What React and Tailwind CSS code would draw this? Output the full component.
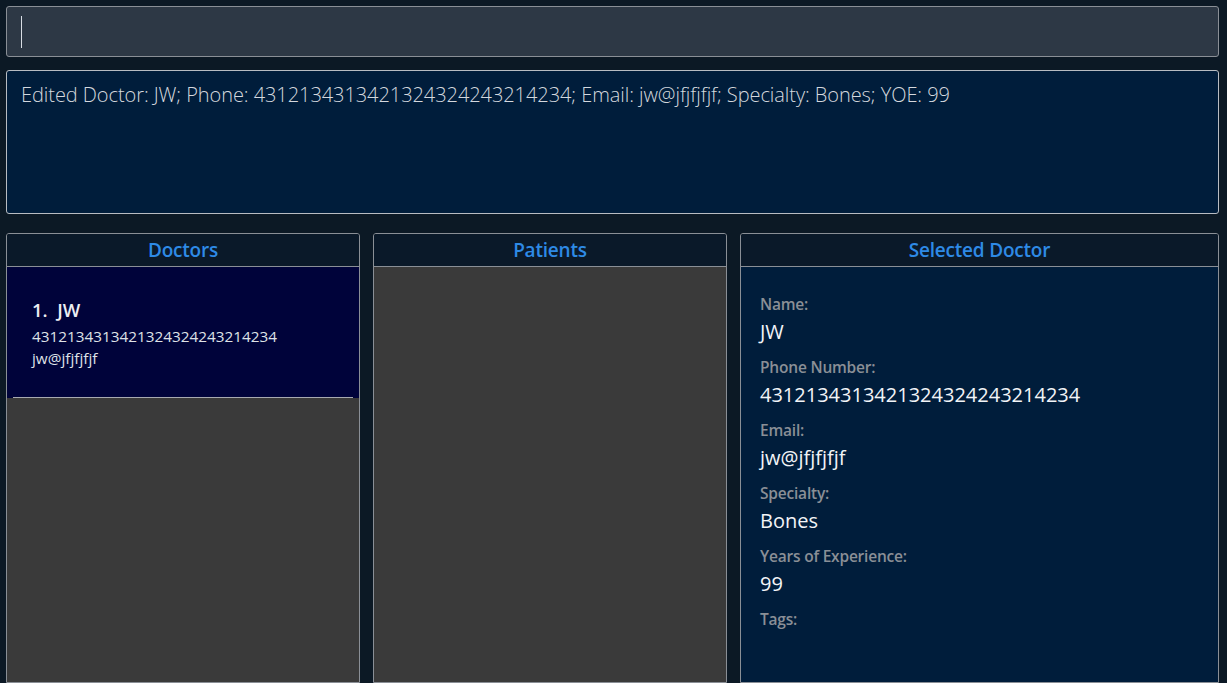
import React from 'react';

const fields = [
  { label: 'Name:', value: 'JW' },
  { label: 'Phone Number:', value: '4312134313421324324243214234' },
  { label: 'Email:', value: 'jw@jfjfjfjf' },
  { label: 'Specialty:', value: 'Bones' },
  { label: 'Years of Experience:', value: '99' },
];

const PanelHeader = ({ title }) => (
  <div className="h-[33px] flex items-center justify-center bg-[#0a1929] border-b border-[#8a8f96]">
    <span className="text-[19px] font-semibold text-[#2e8ae6] tracking-[-0.2px]">{title}</span>
  </div>
);

export default function App() {
  return (
    <div
      className="w-[1227px] h-[683px] overflow-hidden bg-[#0c1925] flex flex-col pt-[6px] px-[6px] pr-[8px]"
      style={{ fontFamily: '"Open Sans", "Noto Sans", sans-serif' }}
    >
      {/* Command box */}
      <div className="h-[51px] shrink-0 rounded-[3px] border border-[#8a8f96] bg-[#2d3845] flex items-center pl-[14px]">
        <div className="w-[1px] h-[32px] bg-[#d8dde3]" />
      </div>

      {/* Result box */}
      <div className="mt-[13px] h-[144px] shrink-0 rounded-[3px] border border-[#b8bcc2] bg-[#001d3b] px-[14px] pt-[9px]">
        <p className="text-[20px] font-light text-[#d4d8de] tracking-[-0.07px]">
          Edited Doctor: JW; Phone: 4312134313421324324243214234; Email: jw@jfjfjfjf; Specialty: Bones; YOE: 99
        </p>
      </div>

      {/* Panels */}
      <div className="mt-[19px] flex-1 grid grid-cols-[354px_354px_1fr] gap-[13px] min-h-0">
        <div className="flex flex-col border border-[#8a8f96] rounded-t-[3px] overflow-hidden">
          <PanelHeader title="Doctors" />
          <div className="flex-1 bg-[#3a3a3a]">
            <div className="bg-[#00033a] h-[131px] px-[25px] pt-[31px] relative">
              <div className="text-[18.5px] font-semibold text-[#eceef2] leading-[24px]">1.&nbsp;&nbsp;JW</div>
              <div className="text-[15.3px] text-[#dfe2e7] leading-[22px] mt-[3px]">4312134313421324324243214234</div>
              <div className="text-[15.3px] text-[#dfe2e7] leading-[22px]">jw@jfjfjfjf</div>
              <div className="absolute left-[6px] right-[6px] bottom-0 h-[1px] bg-[#a8aab0]" />
            </div>
          </div>
        </div>

        <div className="flex flex-col border border-[#8a8f96] rounded-t-[3px] overflow-hidden">
          <PanelHeader title="Patients" />
          <div className="flex-1 bg-[#3a3a3a]" />
        </div>

        <div className="flex flex-col border border-[#8a8f96] rounded-t-[3px] overflow-hidden">
          <PanelHeader title="Selected Doctor" />
          <div className="flex-1 bg-[#001d3b] px-[19px] pt-[25px]">
            {fields.map(f => (
              <div key={f.label} className="h-[63px]">
                <div className="text-[15.5px] font-semibold text-[#8a8f96] leading-[24px] tracking-[-0.2px]">{f.label}</div>
                <div className="text-[20px] text-[#f2f4f7] leading-[32px]">{f.value}</div>
              </div>
            ))}
            <div className="text-[15.5px] font-semibold text-[#8a8f96] leading-[24px] tracking-[-0.2px]">Tags:</div>
          </div>
        </div>
      </div>
    </div>
  );
}
